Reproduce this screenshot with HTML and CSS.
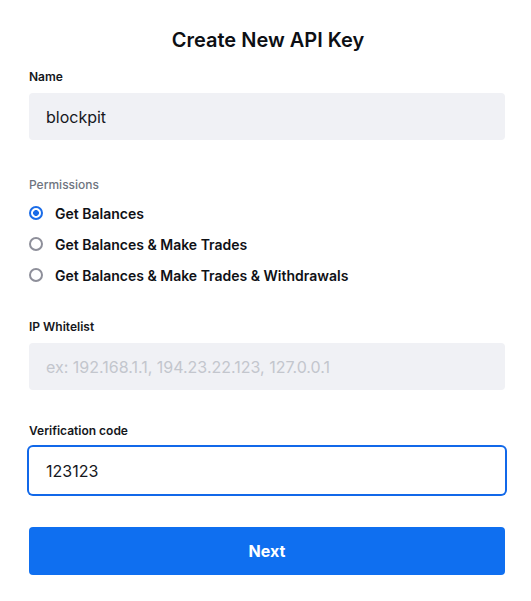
FILE: index.html
```html
<!DOCTYPE html>
<html lang="en">
<head>
<meta charset="utf-8">
<title>Create New API Key</title>
<link rel="stylesheet" href="styles.css">
</head>
<body>
<form class="form">
  <h1 class="title">Create New API Key</h1>

  <label class="label label-name" for="name">Name</label>
  <input class="field" id="name" type="text" value="blockpit">

  <div class="label label-muted label-perm">Permissions</div>
  <div class="radios">
    <label class="radio"><span class="dot dot-on"></span><span>Get Balances</span></label>
    <label class="radio"><span class="dot"></span><span>Get Balances &amp; Make Trades</span></label>
    <label class="radio"><span class="dot"></span><span>Get Balances &amp; Make Trades &amp; Withdrawals</span></label>
  </div>

  <label class="label label-ip" for="ip">IP Whitelist</label>
  <input class="field" id="ip" type="text" placeholder="ex: 192.168.1.1, 194.23.22.123, 127.0.0.1">

  <label class="label label-code" for="code">Verification code</label>
  <input class="field field-focus" id="code" type="text" value="123123">

  <button class="btn" type="button">Next</button>
</form>
</body>
</html>
```
FILE: styles.css
```css
* { box-sizing: border-box; }
html, body { margin: 0; background: #fff; }
body {
  font-family: Inter, "Noto Sans", sans-serif;
  color: #111318;
}
.form {
  display: flex;
  flex-direction: column;
  padding: 26px 26px 0 29px;
  width: 531px;
}
.title {
  margin: 0;
  font-size: 20px;
  line-height: 28px;
  font-weight: 600;
  text-align: center;
  color: #0d0f14;
  padding-left: 2px;
}
.label {
  display: block;
  font-size: 12px;
  line-height: 16px;
  font-weight: 600;
  color: #15171c;
  margin-bottom: 8px;
}
.label-name { margin-top: 15px; }
.label-muted { font-weight: 500; color: #6e7480; }
.label-perm { margin-top: 37px; margin-bottom: 10px; }
.label-ip { margin-top: 34px; }
.label-code { margin-top: 33px; }
.field {
  width: 476px;
  height: 47px;
  border: none;
  border-radius: 4px;
  background: #f0f1f5;
  padding: 0 17px;
  font-family: inherit;
  font-size: 16px;
  color: #16181d;
  outline: none;
}
.field::placeholder { color: #c3c6cd; }
.field-focus {
  background: #fff;
  box-shadow: 0 0 0 2px #1168e9;
}
.radios {
  display: flex;
  flex-direction: column;
  gap: 11px;
}
.radio {
  display: flex;
  align-items: center;
  gap: 12px;
  height: 20px;
  font-size: 14px;
  font-weight: 600;
  color: #0f1116;
}
.dot {
  width: 14px;
  height: 14px;
  border-radius: 50%;
  border: 2px solid #8e8f9a;
  flex: none;
}
.dot-on {
  border-color: #1a6ce8;
  background: radial-gradient(circle, #1a6ce8 0 2.6px, #fff 3.2px);
}
.btn {
  margin-top: 33px;
  width: 476px;
  height: 48px;
  border: none;
  border-radius: 4px;
  background: #0f6ff0;
  color: #fff;
  font-family: inherit;
  font-size: 16px;
  font-weight: 700;
}
```
